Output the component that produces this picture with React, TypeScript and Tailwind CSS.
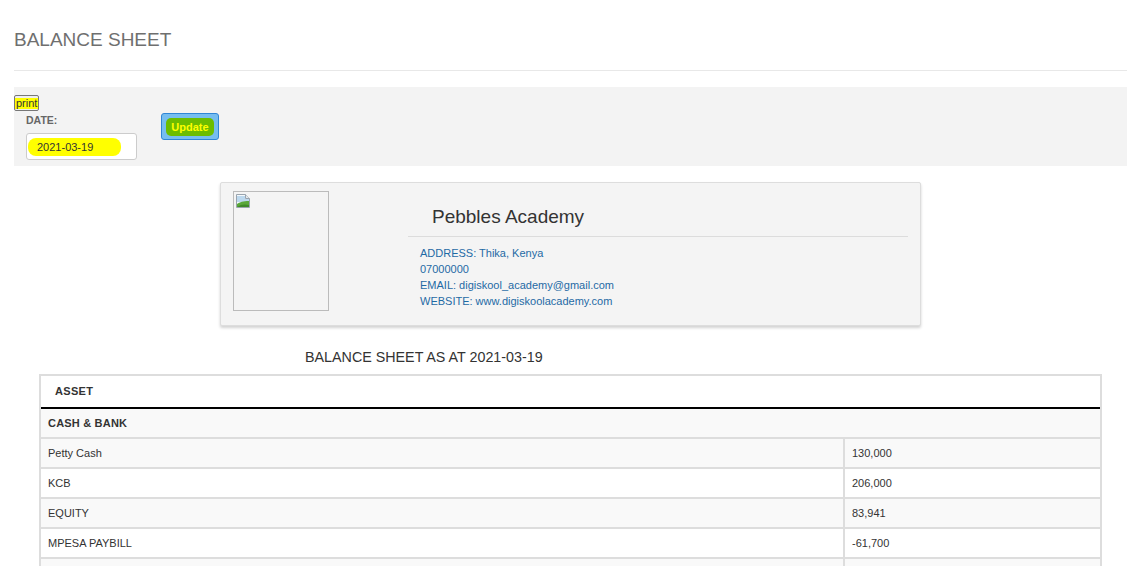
import React from 'react';

const rows = [
  { name: 'Petty Cash', amount: '130,000' },
  { name: 'KCB', amount: '206,000' },
  { name: 'EQUITY', amount: '83,941' },
  { name: 'MPESA PAYBILL', amount: '-61,700' },
  { name: '', amount: '' },
];

// broken image placeholder glyph
function BrokenImage() {
  return (
    <svg width="16" height="16" viewBox="0 0 16 16">
      <path d="M1.5 1.5h9l4 4v9h-13z" fill="#f4f8fb" stroke="#9aa4ae" />
      <path d="M10.5 1.5v4h4" fill="#e3e7ea" stroke="#9aa4ae" />
      <path d="M2 3h8v3h4v3H2z" fill="#bcd8ee" />
      <path d="M2 14V11c3-2 6-3 12-3v6z" fill="#5aa83a" />
      <path d="M2 14c4-3 8-3 12-2v2z" fill="#3f8a2a" />
    </svg>
  );
}

export default function App() {
  return (
    <div className="min-h-screen bg-white pl-[14px] pr-[11px] pb-10 font-['Liberation_Sans',Arial,sans-serif] text-[#333]">
      {/* Page title */}
      <h1 className="pt-[29px] text-[19px] leading-[22px] text-[#6f6f6f]">BALANCE SHEET</h1>
      <div className="mt-[19px] h-px bg-[#e8e8e8]" />

      {/* Filter panel */}
      <div className="mt-[16px] bg-[#f3f3f3] pt-[8px] pb-[6px]">
        <button className="flex h-[16px] items-center rounded-[2px] border border-[#777] bg-[#efefef] px-0 text-[11px] leading-none">
          <span className="bg-[#ffff00] px-[1px] text-[#333]">print</span>
        </button>
        <div className="mt-[2px] flex items-start">
          <div className="pl-[12px]">
            <div className="text-[10.5px] font-bold leading-[14px] text-[#666]">DATE:</div>
            <div className="mt-[6px] flex h-[27px] w-[111px] items-center rounded-[3px] border border-[#cccccc] bg-white pl-[1px]">
              <span className="rounded-[8px] bg-[#ffff00] py-[3px] pl-[9px] pr-[28px] text-[11px] leading-[12px] text-[#333]">
                2021-03-19
              </span>
            </div>
          </div>
          <button className="ml-[24px] flex h-[27px] w-[58px] items-center justify-center rounded-[3px] border border-[#2f86d6] bg-[#76bdf0]">
            <span className="rounded-[5px] bg-[#6cbd00] px-[5px] py-[3px] text-[11px] font-bold leading-[12px] text-[#ffff00]">
              Update
            </span>
          </button>
        </div>
      </div>

      {/* School card */}
      <div className="mx-auto mt-[16px] flex h-[144px] w-[701px] rounded-[2px] border border-[#dddddd] bg-[#f4f4f4] pt-[8px] pl-[12px] pr-[12px] shadow-[0_2px_3px_rgba(0,0,0,0.18)]">
        <div className="h-[120px] w-[96px] border border-[#bbbbbb] pl-[1px] pt-[1px]">
          <BrokenImage />
        </div>
        <div className="ml-[79px] flex-1">
          <div className="mt-[13px] pl-[24px] text-[19px] leading-[26px] text-[#333]">Pebbles Academy</div>
          <div className="mt-[6px] h-px bg-[#dcdcdc]" />
          <div className="mt-[8px] pl-[12px] text-[11px] leading-[16px] text-[#1f6aa5]">
            <div>ADDRESS: Thika, Kenya</div>
            <div>07000000</div>
            <div>EMAIL: digiskool_academy@gmail.com</div>
            <div>WEBSITE: www.digiskoolacademy.com</div>
          </div>
        </div>
      </div>

      {/* Report heading */}
      <div className="ml-[291px] mt-[23px] text-[14.3px] leading-[16px] text-[#333]">BALANCE SHEET AS AT 2021-03-19</div>

      {/* Table */}
      <div className="mx-[25px] mt-[9px] border-x-2 border-t-2 border-[#dddddd] text-[11px]">
        <div className="flex h-[33px] items-center border-b-2 border-black bg-white pl-[14px] font-bold tracking-[0.3px] text-[#333]">
          ASSET
        </div>
        <div className="flex h-[30px] items-center border-b-2 border-[#dddddd] bg-[#f9f9f9] pl-[7px] font-bold tracking-[0.2px] text-[#333]">
          CASH &amp; BANK
        </div>
        {rows.map((r, i) => (
          <div
            key={i}
            className={
              'flex h-[30px] items-stretch border-b-2 border-[#dddddd] ' +
              (i % 2 === 0 ? 'bg-[#f9f9f9]' : 'bg-white')
            }
          >
            <div className="flex flex-1 items-center pl-[7px] text-[#333]">{r.name}</div>
            <div className="flex w-[257px] items-center border-l-2 border-[#dddddd] pl-[7px] text-[#333]">{r.amount}</div>
          </div>
        ))}
      </div>
    </div>
  );
}
